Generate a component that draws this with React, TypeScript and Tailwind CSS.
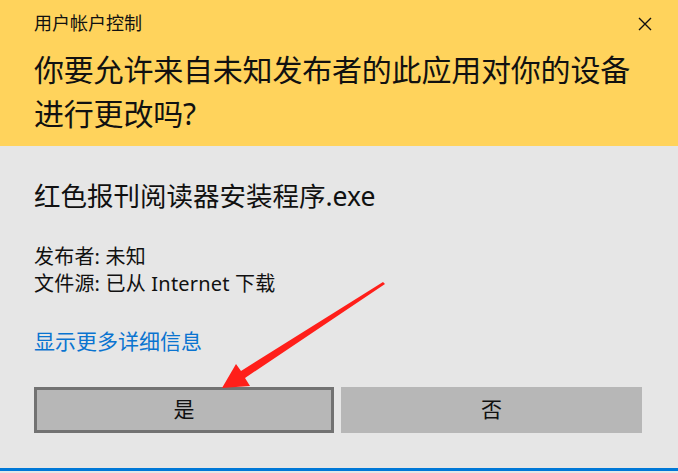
import React from "react";

export default function App() {
  const font = { fontFamily: '"Noto Sans", "Noto Sans CJK SC", sans-serif' };
  return (
    <div className="relative w-[678px] h-[473px] overflow-hidden bg-[#e6e6e6]" style={font}>
      <div className="h-[146px] bg-[#ffd35c] pl-[34px] pr-[26px] pt-[10px]">
        <div className="flex items-start justify-between">
          <div className="text-[18px] leading-[26px] text-[#111]">用户帐户控制</div>
          <svg width="14" height="14" viewBox="0 0 14 14" className="mt-[7px]">
            <path d="M1 1 L13 13 M13 1 L1 13" stroke="#111" strokeWidth="1.4" fill="none" />
          </svg>
        </div>
        <div className="mt-[12px] text-[30px] leading-[44px] text-[#111] tracking-[-0.2px]">
          你要允许来自未知发布者的此应用对你的设备
          <br />
          进行更改吗?
        </div>
      </div>
      <div className="pl-[34px] pt-[32px]">
        <div className="text-[26.5px] leading-[36px] text-[#111]">红色报刊阅读器安装程序.exe</div>
        <div className="mt-[29px] text-[20px] leading-[27px] text-[#111] tracking-[0.2px]">
          <div>发布者: 未知</div>
          <div>文件源: 已从 Internet 下载</div>
        </div>
        <div className="mt-[30px] text-[21px] leading-[28px] text-[#0a74d0]">显示更多详细信息</div>
        <div className="mt-[32px] flex gap-[7px]">
          <div className="w-[300px] h-[46px] border-[3px] border-[#727272] bg-[#b7b7b7] flex items-center justify-center text-[21px] text-[#111]">
            是
          </div>
          <div className="w-[301px] h-[46px] bg-[#b7b7b7] flex items-center justify-center text-[21px] text-[#111]">
            否
          </div>
        </div>
      </div>
      <div className="absolute left-0 right-0 top-[468px] h-[3px] bg-[#0078d7]" />
      <svg className="absolute left-0 top-0 pointer-events-none" width="678" height="473">
        <polygon
          points="385,284 245,378 250,386 222,388 236,364 241,371 383,282"
          fill="#ff1f1a"
        />
      </svg>
    </div>
  );
}
